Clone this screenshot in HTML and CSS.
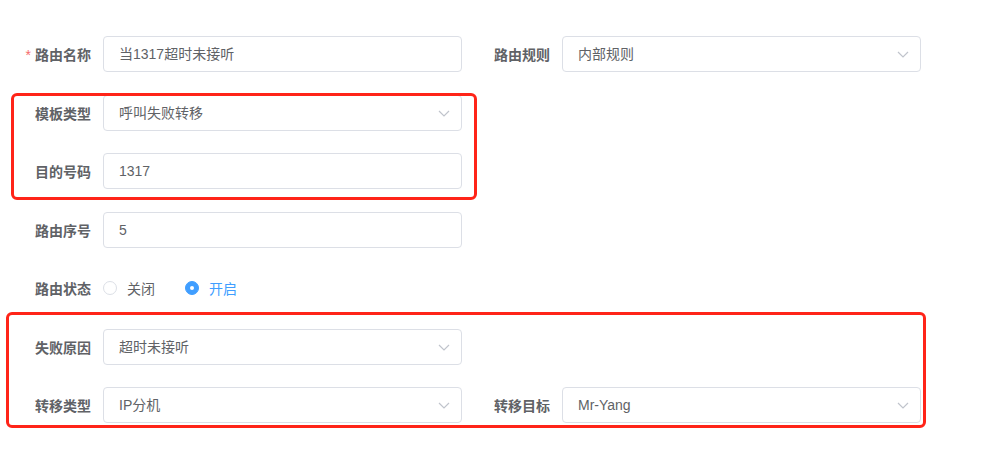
FILE: index.html
```html
<!DOCTYPE html>
<html lang="zh-CN">
<head>
    <meta charset="UTF-8">
    <meta name="viewport" content="width=device-width, initial-scale=1.0">
    <title>路由编辑</title>
    <link rel="stylesheet" href="styles.css">
</head>
<body>
    <div class="page">
        <form class="route-form">
            <div class="form-row">
                <div class="form-item">
                    <label class="form-label"><span class="req">*</span>路由名称</label>
                    <div class="input">当1317超时未接听</div>
                </div>
                <div class="form-item">
                    <label class="form-label">路由规则</label>
                    <div class="input select">内部规则<svg class="arrow" viewBox="0 0 12 7"><path d="M1 1l5 5 5-5"/></svg></div>
                </div>
            </div>
            <div class="form-row">
                <div class="form-item">
                    <label class="form-label">模板类型</label>
                    <div class="input select">呼叫失败转移<svg class="arrow" viewBox="0 0 12 7"><path d="M1 1l5 5 5-5"/></svg></div>
                </div>
            </div>
            <div class="form-row">
                <div class="form-item">
                    <label class="form-label">目的号码</label>
                    <div class="input">1317</div>
                </div>
            </div>
            <div class="form-row">
                <div class="form-item">
                    <label class="form-label">路由序号</label>
                    <div class="input">5</div>
                </div>
            </div>
            <div class="form-row">
                <div class="form-item">
                    <label class="form-label">路由状态</label>
                    <div class="radio-group">
                        <span class="radio"><span class="radio-dot"></span>关闭</span>
                        <span class="radio checked"><span class="radio-dot"></span>开启</span>
                    </div>
                </div>
            </div>
            <div class="form-row">
                <div class="form-item">
                    <label class="form-label">失败原因</label>
                    <div class="input select">超时未接听<svg class="arrow" viewBox="0 0 12 7"><path d="M1 1l5 5 5-5"/></svg></div>
                </div>
            </div>
            <div class="form-row">
                <div class="form-item">
                    <label class="form-label">转移类型</label>
                    <div class="input select">IP分机<svg class="arrow" viewBox="0 0 12 7"><path d="M1 1l5 5 5-5"/></svg></div>
                </div>
                <div class="form-item">
                    <label class="form-label">转移目标</label>
                    <div class="input select">Mr-Yang<svg class="arrow" viewBox="0 0 12 7"><path d="M1 1l5 5 5-5"/></svg></div>
                </div>
            </div>
        </form>
        <!-- 标注框 -->
        <div class="mark mark-1"></div>
        <div class="mark mark-2"></div>
    </div>
</body>
</html>
```

FILE: styles.css
```css
*{padding:0;margin:0;box-sizing:border-box;}
body{background:#fff;font-family:"Liberation Sans","Noto Sans CJK SC",sans-serif;font-size:14px;color:#606266;}
.page{position:relative;width:984px;height:461px;}
.route-form{padding:36px 0 0 3px;}
.form-row{display:flex;margin-bottom:22.5px;}
.form-item{display:flex;align-items:center;width:459px;height:36px;}
.form-label{width:100px;padding-right:12px;text-align:right;font-weight:700;color:#606266;}
.req{color:#f56c6c;margin-right:4px;font-weight:400;}
.input{position:relative;width:359px;height:36px;line-height:34px;padding:0 15px;border:1px solid #dcdfe6;border-radius:4px;color:#606266;background:#fff;}
.arrow{position:absolute;right:11px;top:14px;width:12px;height:7px;fill:none;stroke:#c0c4cc;stroke-width:1.2;}
.radio-group{display:flex;align-items:center;}
.radio{display:flex;align-items:center;margin-right:30px;color:#606266;}
.radio-dot{width:14px;height:14px;border:1px solid #dcdfe6;border-radius:50%;margin-right:10px;background:#fff;}
.radio.checked{color:#409eff;}
.radio.checked .radio-dot{border-color:#409eff;background:#409eff;display:flex;align-items:center;justify-content:center;}
.radio.checked .radio-dot::after{content:"";width:4px;height:4px;border-radius:50%;background:#fff;}
.mark{position:absolute;border:3px solid #ff2418;border-radius:6px;}
.mark-1{left:11px;top:93px;width:466px;height:107px;}
.mark-2{left:6px;top:312px;width:920px;height:116px;}
```
